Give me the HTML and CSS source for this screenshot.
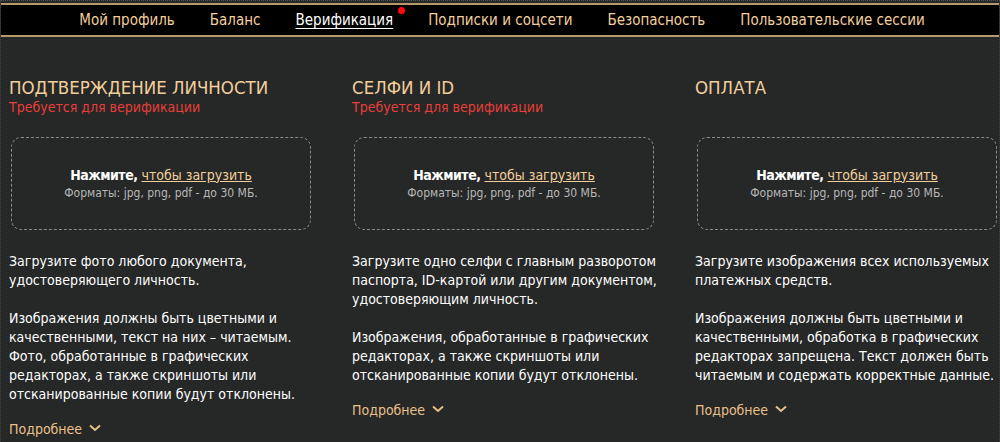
FILE: index.html
```html
<!DOCTYPE html>
<html lang="ru">
<head>
    <meta charset="UTF-8">
    <title>Верификация</title>
    <link rel="stylesheet" href="styles.css">
</head>
<body>
    <div class="frame">
        <nav class="tabs">
            <a href="#">Мой профиль</a>
            <a href="#">Баланс</a>
            <a href="#" class="active">Верификация<span class="dot"></span></a>
            <a href="#">Подписки и соцсети</a>
            <a href="#">Безопасность</a>
            <a href="#">Пользовательские сессии</a>
        </nav>

        <div class="columns">
            <div class="col">
                <h2>ПОДТВЕРЖДЕНИЕ ЛИЧНОСТИ</h2>
                <div class="required">Требуется для верификации</div>
                <div class="upload">
                    <div class="click"><b>Нажмите,</b> <a href="#">чтобы загрузить</a></div>
                    <div class="formats">Форматы: jpg, png, pdf - до 30 МБ.</div>
                </div>
                <p>Загрузите фото любого документа,<br>удостоверяющего личность.</p>
                <p>Изображения должны быть цветными и<br>качественными, текст на них – читаемым.<br>Фото, обработанные в графических<br>редакторах, а также скриншоты или<br>отсканированные копии будут отклонены.</p>
                <a href="#" class="more">Подробнее <svg width="12" height="8" viewBox="0 0 12 8"><path d="M1 1.5 L6 6 L11 1.5" fill="none" stroke="#e8c08a" stroke-width="2"/></svg></a>
            </div>
            <div class="col">
                <h2>СЕЛФИ И ID</h2>
                <div class="required">Требуется для верификации</div>
                <div class="upload">
                    <div class="click"><b>Нажмите,</b> <a href="#">чтобы загрузить</a></div>
                    <div class="formats">Форматы: jpg, png, pdf - до 30 МБ.</div>
                </div>
                <p>Загрузите одно селфи с главным разворотом<br>паспорта, ID-картой или другим документом,<br>удостоверяющим личность.</p>
                <p>Изображения, обработанные в графических<br>редакторах, а также скриншоты или<br>отсканированные копии будут отклонены.</p>
                <a href="#" class="more">Подробнее <svg width="12" height="8" viewBox="0 0 12 8"><path d="M1 1.5 L6 6 L11 1.5" fill="none" stroke="#e8c08a" stroke-width="2"/></svg></a>
            </div>
            <div class="col">
                <h2>ОПЛАТА</h2>
                <div class="required"></div>
                <div class="upload">
                    <div class="click"><b>Нажмите,</b> <a href="#">чтобы загрузить</a></div>
                    <div class="formats">Форматы: jpg, png, pdf - до 30 МБ.</div>
                </div>
                <p>Загрузите изображения всех используемых<br>платежных средств.</p>
                <p>Изображения должны быть цветными и<br>качественными, обработка в графических<br>редакторах запрещена. Текст должен быть<br>читаемым и содержать корректные данные.</p>
                <a href="#" class="more">Подробнее <svg width="12" height="8" viewBox="0 0 12 8"><path d="M1 1.5 L6 6 L11 1.5" fill="none" stroke="#e8c08a" stroke-width="2"/></svg></a>
            </div>
        </div>
    </div>
</body>
</html>
```

FILE: styles.css
```css
body {
    margin: 0;
    background-color: #262727;
    font-family: "DejaVu Sans Condensed", "DejaVu Sans", Tahoma, sans-serif;
    font-stretch: condensed;
    color: #ffffff;
    overflow: hidden;
}
.frame {
    height: 442px;
    border-top: 1px dotted #555;
    border-left: 1px dotted #444;
    border-right: 1px dotted #444;
    box-sizing: border-box;
    padding-top: 2px;
}
.tabs {
    display: flex;
    justify-content: center;
    gap: 35px;
    background: #000;
    border-top: 2px solid #b89a6a;
    border-bottom: 2px solid #b89a6a;
    height: 30px;
    align-items: center;
    padding-left: 4px;
}
.tabs a {
    color: #f2cf9c;
    text-decoration: none;
    font-size: 15px;
    position: relative;
}
.tabs a.active {
    color: #fff;
    text-decoration: underline;
    text-underline-offset: 3px;
}
.dot {
    position: absolute;
    top: -4px;
    right: -12px;
    width: 7px;
    height: 7px;
    border-radius: 50%;
    background: #ff0a0a;
}
.columns {
    display: grid;
    grid-template-columns: 343px 343px 1fr;
    padding: 41px 0 0 8px;
}
.col h2 {
    margin: 0;
    font-weight: normal;
    font-size: 18.5px;
    color: #f2cf9c;
    line-height: 20px;
}
.required {
    color: #e8403a;
    font-size: 14px;
    line-height: 18px;
    height: 18px;
}
.upload {
    margin: 21px 0 0 2px;
    width: 300px;
    height: 93px;
    box-sizing: border-box;
    border: 1px dashed #8a8a8a;
    border-radius: 10px;
    display: flex;
    flex-direction: column;
    justify-content: center;
    align-items: center;
}
.click {
    font-size: 14px;
    line-height: 18px;
}
.click b {
    letter-spacing: -0.5px;
}
.click a {
    color: #f2cf9c;
    text-decoration: underline;
}
.formats {
    font-size: 12px;
    color: #b8b8b8;
    line-height: 18px;
}
.col p {
    margin: 19px 0 0;
    font-size: 14px;
    line-height: 19px;
}
.col .upload + p {
    margin-top: 22px;
}
.more {
    display: inline-block;
    margin-top: 16px;
    color: #e8c08a;
    text-decoration: none;
    font-size: 14px;
    line-height: 19px;
}
.more svg {
    margin-left: 3px;
    vertical-align: 2px;
}
```
